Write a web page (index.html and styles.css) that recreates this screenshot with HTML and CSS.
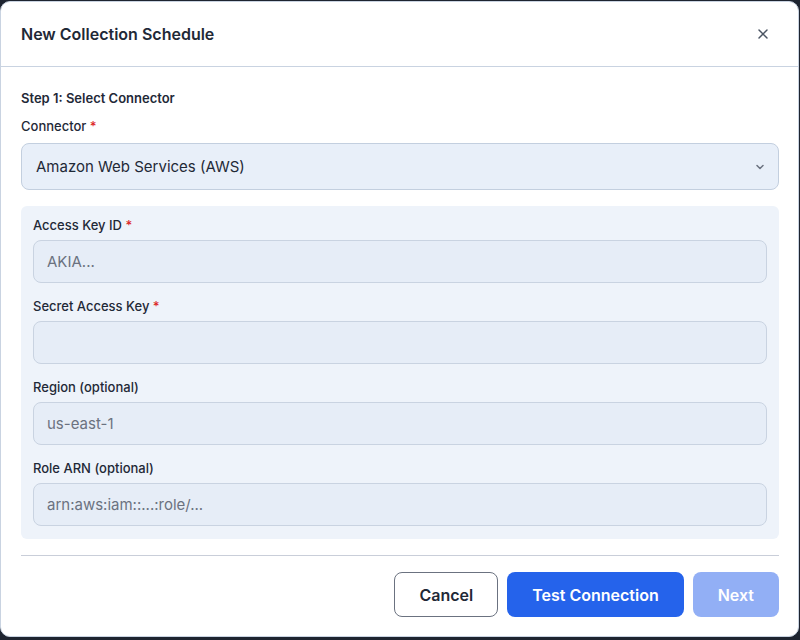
FILE: index.html
```html
<!DOCTYPE html>
<html lang="en">
<head>
  <meta charset="UTF-8" />
  <title>New Collection Schedule</title>
  <link rel="stylesheet" href="styles.css">
</head>
<body>

  <div class="modal">
    <div class="modal-header">
      <h3>New Collection Schedule</h3>
      <button class="close-btn" aria-label="Close">
        <svg width="16" height="16" viewBox="0 0 24 24" fill="none" stroke="currentColor" stroke-width="2.2" stroke-linecap="round"><path d="M6 6l12 12M18 6L6 18"/></svg>
      </button>
    </div>

    <div class="modal-body">
      <h4 class="step">Step 1: Select Connector</h4>

      <label class="field-label">Connector <span class="req">*</span></label>
      <div class="select">
        <span>Amazon Web Services (AWS)</span>
        <svg width="12" height="12" viewBox="0 0 24 24" fill="none" stroke="currentColor" stroke-width="3" stroke-linecap="round" stroke-linejoin="round"><path d="M6 9l6 6 6-6"/></svg>
      </div>

      <div class="creds">
        <div class="field">
          <label class="field-label">Access Key ID <span class="req">*</span></label>
          <input type="text" placeholder="AKIA..." />
        </div>
        <div class="field">
          <label class="field-label">Secret Access Key <span class="req">*</span></label>
          <input type="password" />
        </div>
        <div class="field">
          <label class="field-label">Region (optional)</label>
          <input type="text" placeholder="us-east-1" />
        </div>
        <div class="field">
          <label class="field-label">Role ARN (optional)</label>
          <input type="text" placeholder="arn:aws:iam::...:role/..." />
        </div>
      </div>

      <div class="actions">
        <button class="btn btn-outline">Cancel</button>
        <button class="btn btn-primary">Test Connection</button>
        <button class="btn btn-primary" disabled>Next</button>
      </div>
    </div>
  </div>

</body>
</html>
```

FILE: styles.css
```css
* {
  box-sizing: border-box;
}
body {
  margin: 0;
  background: #1e2430;
  font-family: Inter, 'Noto Sans', sans-serif;
  color: #1f2937;
}
.modal {
  margin: 1px 1px 0 0;
  height: 636px;
  background: #fff;
  border: 1px solid #c9d3e1;
  border-radius: 10px;
  display: flex;
  flex-direction: column;
}
.modal-header {
  display: flex;
  justify-content: space-between;
  align-items: center;
  height: 65px;
  padding: 0 20px;
  border-bottom: 1px solid #c9d3e1;
}
.modal-header h3 {
  margin: 0;
  font-size: 16px;
  font-weight: 600;
  color: #1f2937;
}
.close-btn {
  background: transparent;
  border: none;
  padding: 0;
  margin-right: 7px;
  color: #4b5563;
  cursor: pointer;
  display: flex;
}
.modal-body {
  padding: 23px 19px 0 20px;
  flex: 1;
}
.step {
  margin: 0 0 12px;
  font-size: 13px;
  font-weight: 600;
  color: #1f2937;
}
.field-label {
  display: block;
  font-size: 13px;
  font-weight: 500;
  color: #1f2937;
  margin-bottom: 9px;
}
.req {
  color: #dc2626;
}
.select {
  display: flex;
  justify-content: space-between;
  align-items: center;
  height: 47px;
  padding: 0 12px 0 14px;
  background: #e8eff9;
  border: 1px solid #c3cfdf;
  border-radius: 8px;
  font-size: 15px;
  color: #1f2937;
}
.select svg {
  color: #6b7280;
}
.creds {
  margin-top: 16px;
  background: #eef3fa;
  border-radius: 6px;
  padding: 11px 12px 13px;
  display: flex;
  flex-direction: column;
  gap: 15px;
}
.field .field-label {
  margin-bottom: 7px;
}
.field input {
  display: block;
  width: 100%;
  height: 43px;
  padding: 0 13px;
  background: #e6edf7;
  border: 1px solid #c9d3e1;
  border-radius: 8px;
  font-family: inherit;
  font-size: 15px;
  color: #1f2937;
}
.field input::placeholder {
  color: #6b7280;
}
.actions {
  margin-top: 16px;
  padding-top: 16px;
  border-top: 1px solid #c9ced9;
  display: flex;
  justify-content: flex-end;
  gap: 9px;
}
.btn {
  height: 45px;
  padding: 0 25px;
  border-radius: 8px;
  font-family: inherit;
  font-size: 16px;
  font-weight: 600;
  cursor: pointer;
}
.btn-outline {
  background: #fff;
  border: 1px solid #6b7280;
  color: #1f2937;
  padding: 0 24px;
}
.btn-primary {
  background: #2563eb;
  border: none;
  color: #fff;
}
.btn-primary:disabled {
  background: #92aff5;
  cursor: default;
}
```
